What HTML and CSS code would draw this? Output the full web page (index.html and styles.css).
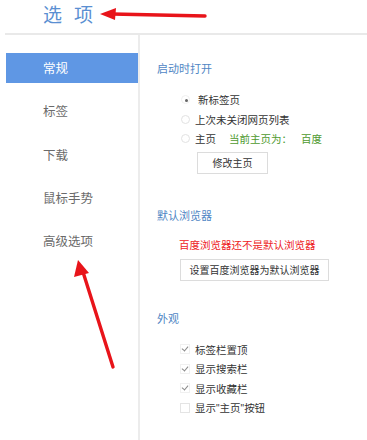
FILE: index.html
```html
<!DOCTYPE html>
<html lang="zh-CN">
<head>
<meta charset="utf-8">
<link rel="stylesheet" href="styles.css">
</head>
<body>
<header class="header">
  <h1 class="title">选<span class="gap"></span>项</h1>
</header>
<div class="main">
  <nav class="sidebar">
    <div class="nav-item active">常规</div>
    <div class="nav-item">标签</div>
    <div class="nav-item">下载</div>
    <div class="nav-item">鼠标手势</div>
    <div class="nav-item">高级选项</div>
  </nav>
  <section class="content">
    <h2 class="section-title first">启动时打开</h2>
    <div class="options">
      <div class="row"><span class="radio checked"></span><span class="label wide">新标签页</span></div>
      <div class="row"><span class="radio"></span><span class="label">上次未关闭网页列表</span></div>
      <div class="row"><span class="radio"></span><span class="label">主页</span><span class="note">当前主页为：</span><span class="note home">百度</span></div>
      <button class="btn btn-home">修改主页</button>
    </div>

    <h2 class="section-title second">默认浏览器</h2>
    <div class="options default">
      <div class="warn">百度浏览器还不是默认浏览器</div>
      <button class="btn btn-default">设置百度浏览器为默认浏览器</button>
    </div>

    <h2 class="section-title third">外观</h2>
    <div class="options checks">
      <div class="row"><span class="check on"></span><span class="label">标签栏置顶</span></div>
      <div class="row"><span class="check on"></span><span class="label">显示搜索栏</span></div>
      <div class="row"><span class="check on"></span><span class="label">显示收藏栏</span></div>
      <div class="row"><span class="check"></span><span class="label">显示<span class="q">"</span>主页<span class="q">"</span>按钮</span></div>
    </div>
  </section>
</div>

<svg class="arrow" width="367" height="440" viewBox="0 0 367 440" aria-hidden="true">
  <line x1="205" y1="16" x2="112" y2="14" stroke="#e8141a" stroke-width="3.4" stroke-linecap="round"/>
  <polygon points="100,14 116,8 115,20" fill="#e8141a"/>
  <line x1="113" y1="367" x2="83" y2="272" stroke="#e8141a" stroke-width="3.4" stroke-linecap="round"/>
  <polygon points="78,260 74,277 89,273" fill="#e8141a"/>
</svg>
</body>
</html>
```

FILE: styles.css
```css
html, body {
  margin: 0;
  padding: 0;
  background: #ffffff;
}

body {
  width: 367px;
  height: 440px;
  overflow: hidden;
  position: relative;
  font-family: "Noto Sans CJK SC", "Noto Sans", sans-serif;
  color: #333333;
}

.header {
  height: 35px;
  margin-left: 5px;
  border-bottom: 2px solid #e9e9e9;
  box-sizing: border-box;
}

.title {
  margin: 0;
  padding-left: 38px;
  padding-top: 1px;
  font-size: 19px;
  font-weight: normal;
  line-height: 26px;
  color: #5a8fd2;
  display: flex;
  align-items: center;
}

.gap {
  display: inline-block;
  width: 12px;
}

.main {
  display: flex;
  margin-left: 6px;
  height: 405px;
}

.sidebar {
  width: 132px;
  flex: none;
  padding-top: 18px;
  border-right: 2px solid #ececec;
}

.nav-item {
  height: 30px;
  margin-bottom: 13.3px;
  padding-left: 37px;
  font-size: 12.5px;
  line-height: 30px;
  color: #6a6a6a;
}

.nav-item.active {
  background: #5f97e4;
  color: #ffffff;
}

.content {
  flex: 1;
  padding-left: 17px;
}

.section-title {
  margin: 0;
  font-size: 11px;
  font-weight: normal;
  line-height: 16px;
  color: #4f86c4;
}

.section-title.first {
  margin-top: 25px;
}

.section-title.second {
  margin-top: 33px;
}

.section-title.third {
  margin-top: 29px;
}

.options {
  padding-left: 23px;
}

.row {
  display: flex;
  align-items: center;
  height: 19.5px;
  font-size: 10.5px;
  color: #333333;
}

.section-title.first + .options {
  padding-top: 14px;
}

.radio {
  width: 9px;
  height: 9px;
  border: 1px solid #e2e2e2;
  border-radius: 50%;
  box-sizing: border-box;
  position: relative;
  flex: none;
  margin-left: 1px;
}

.radio.checked::after {
  content: "";
  position: absolute;
  left: 2.5px;
  top: 2.5px;
  width: 3px;
  height: 3px;
  border-radius: 50%;
  background: #666666;
}

.radio.checked {
  border-color: #f0f0f0;
}

.label {
  margin-left: 5px;
}

.label.wide {
  margin-left: 8px;
}

.q {
  font-family: "Liberation Sans", sans-serif;
  font-size: 10px;
}

.note {
  margin-left: 13px;
  color: #4e9a2e;
}

.note.home {
  margin-left: 9px;
}

.btn {
  display: block;
  height: 22px;
  padding: 0;
  border: 1px solid #dcdcdc;
  background: #ffffff;
  font-family: "Noto Sans CJK SC", "Noto Sans", sans-serif;
  font-size: 10px;
  color: #333333;
  line-height: 20px;
  box-sizing: border-box;
}

.btn-home {
  width: 71px;
  margin-top: 3px;
  margin-left: 17px;
}

.options.default {
  padding-left: 22px;
  padding-top: 14px;
}

.warn {
  font-size: 10.5px;
  line-height: 16px;
  color: #ee1c24;
}

.btn-default {
  width: 149px;
  margin-top: 6px;
  margin-left: 1px;
}

.options.checks {
  padding-top: 14px;
}

.check {
  width: 10px;
  height: 10px;
  border: 1px solid #e4e4e4;
  box-sizing: border-box;
  position: relative;
  flex: none;
}

.check.on::after {
  content: "";
  position: absolute;
  left: 2px;
  top: 0px;
  width: 3px;
  height: 5px;
  border-right: 1px solid #8a8a8a;
  border-bottom: 1px solid #8a8a8a;
  transform: rotate(40deg);
}

.check.on {
  border-color: #f0f0f0;
}

.arrow {
  position: absolute;
  left: 0;
  top: 0;
  pointer-events: none;
}
```
